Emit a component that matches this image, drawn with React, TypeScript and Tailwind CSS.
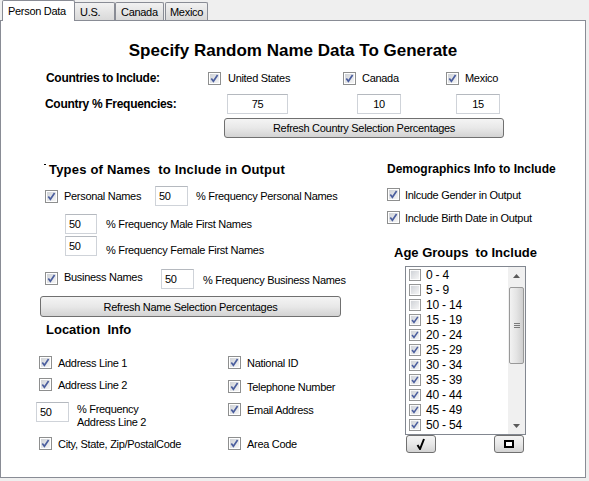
import React from 'react';

const Check: React.FC<{ checked?: boolean; size?: number }> = ({ checked = true, size = 13 }) => (
  <svg width={size} height={size} viewBox="0 0 13 13" className="shrink-0 block">
    <defs>
      <linearGradient id="cbfill" x1="0" y1="0" x2="1" y2="1">
        <stop offset="0" stopColor="#cfd2d7" />
        <stop offset="1" stopColor="#f6f6f6" />
      </linearGradient>
    </defs>
    <rect x="0.5" y="0.5" width="12" height="12" fill="#fff" stroke="#8e8f8f" />
    <rect x="2" y="2" width="9" height="9" fill="url(#cbfill)" />
    {checked && <path d="M3.3 6.4 L5.4 9.2 L9.6 3.1" fill="none" stroke="#4b5e9e" strokeWidth="1.7" />}
  </svg>
);

const Field: React.FC<{ value: string; className?: string; center?: boolean }> = ({ value, className = '', center }) => (
  <div
    className={`h-[20px] shrink-0 bg-white border border-[#cfd3d9] border-t-[#b5b9bf] flex items-center ${center ? 'justify-center' : 'pl-[3px]'} ${className}`}
  >
    {value}
  </div>
);

const WinButton: React.FC<{ className?: string; children: React.ReactNode }> = ({ className = '', children }) => (
  <div
    className={`shrink-0 border border-[#707070] rounded-[3px] bg-linear-to-b from-[#f4f4f4] via-[#e8e8e8] to-[#d3d3d3] flex items-center justify-center ${className}`}
  >
    {children}
  </div>
);

const ages = ['0 - 4', '5 - 9', '10 - 14', '15 - 19', '20 - 24', '25 - 29', '30 - 34', '35 - 39', '40 - 44', '45 - 49', '50 - 54'];

export default function App() {
  return (
    <div className="w-[589px] h-[481px] bg-[#efefef] text-black text-[11px] tracking-[-0.3px] leading-[14px] font-['Liberation_Sans',Arial,sans-serif]">
      {/* tabs */}
      <div className="relative z-10 flex items-end h-[20px]">
        <div className="ml-[2px] w-[73px] h-[21px] -mb-px bg-white border border-b-0 border-[#898c95] rounded-t-[2px] pl-[5px] pt-[3px]">
          Person Data
        </div>
        <div className="w-[40px] h-[18px] bg-linear-to-b from-[#f2f2f2] to-[#d9d9d9] border border-b-0 border-l-0 border-[#898c95] rounded-tr-[2px] pl-[5px] pt-[2px]">
          U.S.
        </div>
        <div className="w-[49px] h-[18px] bg-linear-to-b from-[#f2f2f2] to-[#d9d9d9] border border-b-0 border-[#898c95] rounded-t-[2px] pl-[5px] pt-[2px]">
          Canada
        </div>
        <div className="ml-[1px] w-[43px] h-[18px] bg-linear-to-b from-[#f2f2f2] to-[#d9d9d9] border border-b-0 border-[#898c95] rounded-t-[2px] pl-[4px] pt-[2px]">
          Mexico
        </div>
      </div>

      {/* panel */}
      <div className="w-[586px] h-[458px] bg-white border border-[#898c95] flex flex-col">
        <div className="mt-[20px] h-[20px] text-center text-[17px] leading-[20px] font-bold tracking-normal">
          Specify Random Name Data To Generate
        </div>

        <div className="mt-[10px] h-[14px] flex items-center">
          <div className="ml-[45px] w-[162px] text-[12px] font-bold">Countries to Include:</div>
          <div className="w-[135px] flex items-center">
            <Check />
            <span className="ml-[7px]">United States</span>
          </div>
          <div className="w-[103px] flex items-center">
            <Check />
            <span className="ml-[6px]">Canada</span>
          </div>
          <div className="flex items-center">
            <Check />
            <span className="ml-[6px]">Mexico</span>
          </div>
        </div>

        <div className="mt-[9px] h-[20px] flex items-center">
          <div className="ml-[44px] w-[182px] text-[12px] font-bold">Country % Frequencies:</div>
          <Field value="75" center className="w-[61px]" />
          <Field value="10" center className="ml-[69px] w-[44px]" />
          <Field value="15" center className="ml-[55px] w-[44px]" />
        </div>

        <WinButton className="mt-[4px] ml-[223px] w-[280px] h-[20px]">Refresh Country Selection Percentages</WinButton>

        <div className="flex">
          {/* left column */}
          <div className="w-[385px] flex flex-col">
            <div className="mt-[24px] h-[16px] flex">
              <span className="ml-[43px] mt-[2px] w-[2px] h-[1px] bg-black" />
              <span className="ml-[3px] text-[13px] leading-[16px] font-bold tracking-[0.2px]">
                Types of Names&nbsp; to Include in Output
              </span>
            </div>

            <div className="mt-[8px] h-[20px] flex items-center">
              <span className="ml-[44px]"><Check /></span>
              <span className="ml-[6px] w-[91px]">Personal Names</span>
              <Field value="50" className="w-[33px]" />
              <span className="ml-[8px]">% Frequency Personal Names</span>
            </div>

            <div className="mt-[8px] h-[20px] flex items-center">
              <Field value="50" className="ml-[64px] w-[32px]" />
              <span className="ml-[9px]">% Frequency Male First Names</span>
            </div>

            <div className="mt-[2px] h-[20px] flex items-start">
              <Field value="50" className="ml-[64px] w-[32px]" />
              <span className="ml-[9px] mt-[7px]">% Frequency Female First Names</span>
            </div>

            <div className="mt-[13px] h-[20px] flex items-start">
              <span className="ml-[44px] mt-[3px]"><Check /></span>
              <span className="ml-[6px] mt-[1px] w-[97px]">Business Names</span>
              <Field value="50" className="w-[33px]" />
              <span className="ml-[9px] mt-[4px]">% Frequency Business Names</span>
            </div>

            <WinButton className="mt-[7px] ml-[39px] w-[301px] h-[21px]">Refresh Name Selection Percentages</WinButton>

            <div className="mt-[5px] ml-[45px] h-[16px] text-[13px] leading-[16px] font-bold tracking-normal">
              Location&nbsp; Info
            </div>

            <div className="mt-[18px] flex">
              <div className="ml-[35px] w-[192px] flex flex-col">
                <div className="h-[13px] flex items-center">
                  <span className="ml-[3px]"><Check /></span>
                  <span className="ml-[6px]">Address Line 1</span>
                </div>
                <div className="mt-[9px] h-[13px] flex items-center">
                  <span className="ml-[3px]"><Check /></span>
                  <span className="ml-[6px]">Address Line 2</span>
                </div>
                <div className="mt-[11px] flex items-start">
                  <Field value="50" className="w-[33px]" />
                  <div className="ml-[8px] mt-[1px] leading-[13px]">
                    <div>% Frequency</div>
                    <div>Address Line 2</div>
                  </div>
                </div>
                <div className="mt-[8px] h-[13px] flex items-center">
                  <span className="ml-[3px]"><Check /></span>
                  <span className="ml-[6px]">City, State, Zip/PostalCode</span>
                </div>
              </div>

              <div className="flex flex-col">
                <div className="h-[13px] flex items-center">
                  <Check />
                  <span className="ml-[6px]">National ID</span>
                </div>
                <div className="mt-[11px] h-[13px] flex items-center">
                  <Check />
                  <span className="ml-[6px]">Telephone Number</span>
                </div>
                <div className="mt-[10px] h-[13px] flex items-center">
                  <Check />
                  <span className="ml-[6px]">Email Address</span>
                </div>
                <div className="mt-[21px] h-[13px] flex items-center">
                  <Check />
                  <span className="ml-[6px]">Area Code</span>
                </div>
              </div>
            </div>
          </div>

          {/* right column */}
          <div className="flex-1 flex flex-col">
            <div className="mt-[23px] ml-px h-[16px] text-[12px] leading-[16px] font-bold tracking-normal">
              Demographics Info to Include
            </div>
            <div className="mt-[11px] h-[13px] flex items-center">
              <span className="ml-[1px]"><Check /></span>
              <span className="ml-[5px]">Inlcude Gender in Output</span>
            </div>
            <div className="mt-[10px] h-[13px] flex items-center">
              <span className="ml-[1px]"><Check /></span>
              <span className="ml-[5px]">Include Birth Date in Output</span>
            </div>

            <div className="mt-[21px] ml-[8px] h-[16px] text-[13px] leading-[16px] font-bold tracking-normal">
              Age Groups&nbsp; to Include
            </div>

            <div className="mt-[5px] ml-[19px] w-[121px] h-[169px] border border-[#828790] bg-white flex">
              <div className="flex-1 overflow-hidden flex flex-col">
                {ages.map((a, i) => (
                  <div key={a} className="h-[15px] shrink-0 flex items-center pl-[3px]">
                    <Check checked={i > 2} size={12} />
                    <span className="ml-[5px] text-[12px] tracking-[-0.2px]">{a}</span>
                  </div>
                ))}
              </div>
              <div className="w-[17px] bg-[#f0f0f0] flex flex-col items-center">
                <div className="h-[17px] w-full flex items-center justify-center">
                  <svg width="7" height="4" viewBox="0 0 7 4"><path d="M0 4 L3.5 0 L7 4 Z" fill="#5a5a5a" /></svg>
                </div>
                <div className="mt-[3px] w-[15px] h-[77px] border border-[#999999] rounded-[2px] bg-linear-to-r from-[#f2f2f2] via-[#e4e4e4] to-[#cfcfcf] flex flex-col items-center justify-center gap-[1px]">
                  <div className="w-[6px] h-px bg-[#7a7a7a]" />
                  <div className="w-[6px] h-px bg-[#7a7a7a]" />
                  <div className="w-[6px] h-px bg-[#7a7a7a]" />
                </div>
                <div className="flex-1" />
                <div className="h-[17px] w-full flex items-center justify-center">
                  <svg width="7" height="4" viewBox="0 0 7 4"><path d="M0 0 L3.5 4 L7 0 Z" fill="#5a5a5a" /></svg>
                </div>
              </div>
            </div>

            <div className="flex">
              <WinButton className="ml-[20px] w-[30px] h-[18px]">
                <svg width="10" height="12" viewBox="0 0 10 12">
                  <path d="M1.5 7 L4 11 L8 1" fill="none" stroke="#000" strokeWidth="2" />
                </svg>
              </WinButton>
              <WinButton className="ml-[58px] w-[30px] h-[18px]">
                <div className="w-[10px] h-[8px] border-2 border-black bg-white" />
              </WinButton>
            </div>
          </div>
        </div>
      </div>
    </div>
  );
}
